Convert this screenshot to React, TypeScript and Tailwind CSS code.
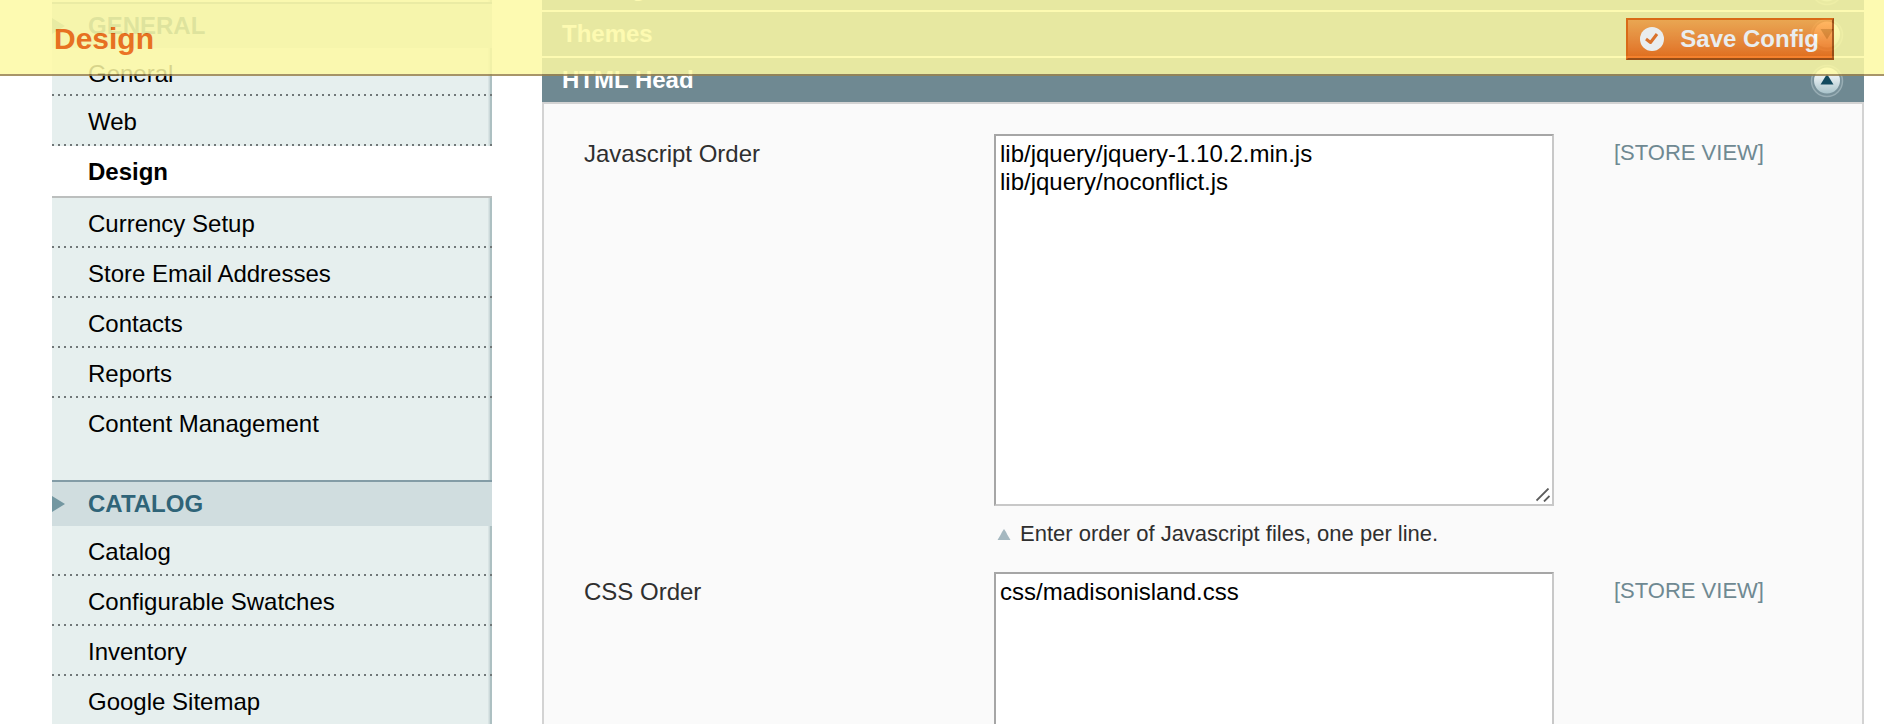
import React from "react";

type Scope = "[STORE VIEW]";

interface Field {
  id: string;
  label: string;
  value: string;
  hint?: string;
  scope: Scope;
}

const fields: Field[] = [
  {
    id: "js-order",
    label: "Javascript Order",
    value: "lib/jquery/jquery-1.10.2.min.js\nlib/jquery/noconflict.js",
    hint: "Enter order of Javascript files, one per line.",
    scope: "[STORE VIEW]",
  },
  {
    id: "css-order",
    label: "CSS Order",
    value: "css/madisonisland.css",
    scope: "[STORE VIEW]",
  },
];

function NavTitle({ children }: { children: React.ReactNode }) {
  return (
    <h4 className="flex items-center border-t-2 border-[#839ca6] bg-[#d0dddf] py-2 font-bold text-[#2f6478]">
      <svg className="h-4 w-4 shrink-0" viewBox="0 0 16 16" aria-hidden="true">
        <path d="M0 0 L13 8 L0 16 Z" fill="#7397a1" />
      </svg>
      <span className="pl-5">{children}</span>
    </h4>
  );
}

function DottedLine() {
  return (
    <svg className="block h-[2px] w-full" aria-hidden="true">
      <line x1="0" y1="1" x2="100%" y2="1" stroke="#707778" strokeWidth="2" strokeDasharray="2 4" />
    </svg>
  );
}

function NavItem({ label, last = false, short = false }: { label: string; last?: boolean; short?: boolean }) {
  return (
    <li>
      <a href="#" className={short ? "block pt-3 pr-4 pb-[6px] pl-9" : "block pt-3 pr-4 pb-2 pl-9"}>
        {label}
      </a>
      {!last && <DottedLine />}
    </li>
  );
}

const edge =
  "bg-[linear-gradient(to_left,#adc0c2_0,#adc0c2_2px,#ccd9da_2px,#ccd9da_3px,#e6efee_4px)]";

function Sidebar() {
  return (
    <nav aria-label="Configuration" className={`ml-[52px] w-[440px] shrink-0 pt-[2px] text-black ${edge}`}>
      <NavTitle>GENERAL</NavTitle>
      <ul className="pb-[34px]">
        <NavItem label="General" short />
        <NavItem label="Web" />
        <li>
          <a
            href="#"
            aria-current="page"
            className="block border-b-2 border-[#bcbfbe] bg-white pt-3 pr-4 pb-[10px] pl-9 font-bold"
          >
            Design
          </a>
        </li>
        <NavItem label="Currency Setup" />
        <NavItem label="Store Email Addresses" />
        <NavItem label="Contacts" />
        <NavItem label="Reports" />
        <NavItem label="Content Management" last />
      </ul>
      <NavTitle>CATALOG</NavTitle>
      <ul>
        <NavItem label="Catalog" />
        <NavItem label="Configurable Swatches" />
        <NavItem label="Inventory" />
        <NavItem label="Google Sitemap" />
      </ul>
    </nav>
  );
}

function ToggleIcon({ open }: { open: boolean }) {
  return (
    <svg className="mt-[2px] h-9 w-9" viewBox="0 0 36 36" aria-hidden="true">
      <defs>
        <linearGradient id={open ? "disc-up" : "disc-down"} x1="0" y1="0" x2="0" y2="1">
          <stop offset="0" stopColor="#ffffff" />
          <stop offset="0.4" stopColor="#e3ecef" />
          <stop offset="1" stopColor="#a9c3ca" />
        </linearGradient>
      </defs>
      <circle cx="18" cy="18" r="15.5" fill="#78919a" stroke="#98adb4" strokeWidth="1.5" />
      <circle cx="18" cy="17.5" r="13" fill={open ? "url(#disc-up)" : "url(#disc-down)"} />
      <path d={open ? "M18 11 L24.5 21.5 L11.5 21.5 Z" : "M18 22.5 L24.5 12 L11.5 12 Z"} fill="#124a5e" />
    </svg>
  );
}

function SectionHead({ title, open = false }: { title: string; open?: boolean }) {
  return (
    <h3>
      <button
        type="button"
        aria-expanded={open}
        className="flex h-11 w-full items-center justify-between bg-[#6f8992] pr-[19px] pl-5 text-left font-bold text-white"
      >
        {title}
        <ToggleIcon open={open} />
      </button>
    </h3>
  );
}

function FieldRow({ field }: { field: Field }) {
  return (
    <div className="grid grid-cols-[410px_560px_1fr]">
      <label htmlFor={field.id} className="pt-[6px] text-[#2f2f2f]">
        {field.label}
      </label>
      <div>
        <div className="relative">
          <textarea
            id={field.id}
            defaultValue={field.value}
            spellCheck={false}
            className="block h-[372px] w-full resize-none overflow-hidden border-2 border-t-[#a6a6a6] border-r-[#c8c8c8] border-b-[#c8c8c8] border-l-[#a6a6a6] bg-white p-1 text-black outline-none"
          />
          <svg className="absolute right-1 bottom-1 h-[14px] w-[14px]" viewBox="0 0 14 14" aria-hidden="true">
            <path d="M0.5 12.5 L12.5 0.5 M8 13.5 L13.5 8" stroke="#5c5c5c" strokeWidth="1.8" fill="none" />
          </svg>
        </div>
        {field.hint && (
          <p className="flex items-center gap-[9px] pt-[14px] pl-[3px] text-[22px] text-[#2f2f2f]">
            <svg className="h-3 w-[14px]" viewBox="0 0 14 12" aria-hidden="true">
              <path d="M7 1 L9 4 L10.5 7 L13.5 12 L0.5 12 L3.5 7 L5 4 Z" fill="#a5b8c0" />
            </svg>
            {field.hint}
          </p>
        )}
      </div>
      <p className="pt-[5px] pl-[60px] text-[22px] text-[#6f8992]">{field.scope}</p>
    </div>
  );
}

function FloatingHeader() {
  return (
    <header className="fixed inset-x-0 top-0 z-10 flex h-[76px] items-center justify-between border-b-2 border-[#99834f] bg-[#fdfaa4] pt-1 pr-[50px] pl-[54px] opacity-85">
      <h2 className="text-[30px] font-bold text-[#eb5e00]">Design</h2>
      <button
        type="button"
        className="flex h-[42px] items-center gap-4 border-2 border-t-[#ed6502] border-r-[#a04300] border-b-[#a04300] border-l-[#ed6502] bg-linear-to-b from-[#ffac47] to-[#f46905] pr-[13px] pl-3 font-bold text-white"
      >
        <svg className="h-6 w-6" viewBox="0 0 24 24" aria-hidden="true">
          <circle cx="12" cy="12" r="12" fill="#ffffff" />
          <path d="M6 12 L10.5 15.5 L17 7" stroke="#ee6f1a" strokeWidth="3" strokeLinejoin="round" fill="none" />
        </svg>
        Save Config
      </button>
    </header>
  );
}

export default function App() {
  return (
    <div className="h-screen overflow-hidden bg-white font-['Liberation_Sans',Arial,sans-serif] text-[24px] leading-[28px]">
      <FloatingHeader />
      <div className="flex min-h-full items-stretch">
        <Sidebar />
        <main className="mt-[-34px] mr-5 ml-[50px] flex min-w-0 flex-1 flex-col">
          <div className="flex flex-col gap-[2px]">
            <SectionHead title="Package" />
            <SectionHead title="Themes" />
            <SectionHead title="HTML Head" open />
          </div>
          <section className="flex flex-1 flex-col gap-6 border-2 border-[#d3d3d3] bg-[#fafafa] pt-[30px] pl-10">
            {fields.map((f) => (
              <FieldRow key={f.id} field={f} />
            ))}
          </section>
        </main>
      </div>
    </div>
  );
}
